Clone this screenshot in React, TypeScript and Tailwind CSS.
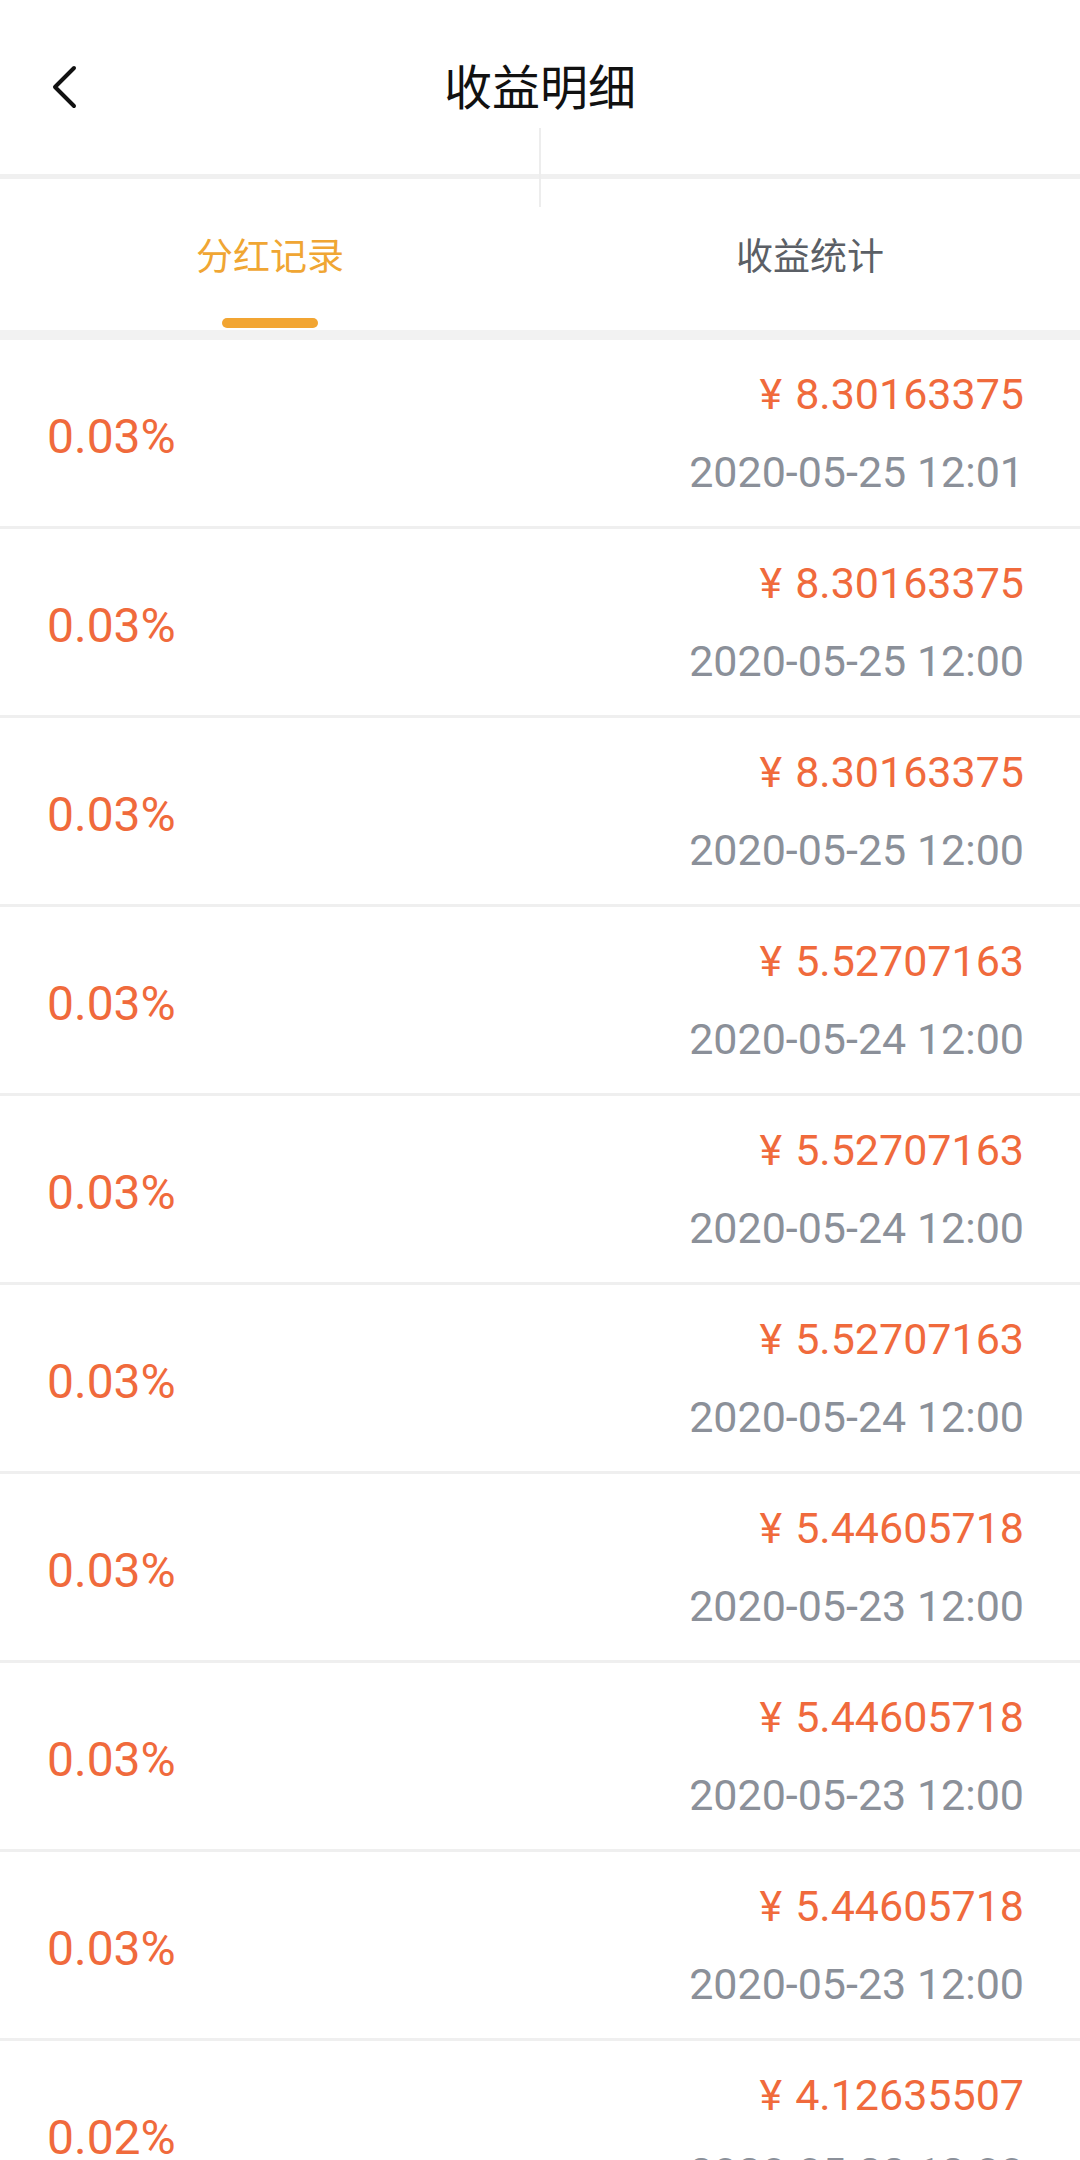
import { Fragment } from "react";

const rows = [
  { rate: "0.03%", amount: "8.30163375", time: "2020-05-25 12:01" },
  { rate: "0.03%", amount: "8.30163375", time: "2020-05-25 12:00" },
  { rate: "0.03%", amount: "8.30163375", time: "2020-05-25 12:00" },
  { rate: "0.03%", amount: "5.52707163", time: "2020-05-24 12:00" },
  { rate: "0.03%", amount: "5.52707163", time: "2020-05-24 12:00" },
  { rate: "0.03%", amount: "5.52707163", time: "2020-05-24 12:00" },
  { rate: "0.03%", amount: "5.44605718", time: "2020-05-23 12:00" },
  { rate: "0.03%", amount: "5.44605718", time: "2020-05-23 12:00" },
  { rate: "0.03%", amount: "5.44605718", time: "2020-05-23 12:00" },
  { rate: "0.02%", amount: "4.12635507", time: "2020-05-22 12:00" },
];

function BackIcon() {
  return (
    <svg width="40" height="56" viewBox="0 0 40 56" fill="none">
      <path
        d="M22 9 L3 28 L22 47"
        stroke="#111"
        strokeWidth="4"
        strokeLinecap="round"
        strokeLinejoin="round"
      />
    </svg>
  );
}

export default function App() {
  return (
    <div className="relative w-[1080px] min-h-screen bg-white font-['Roboto','Noto_Sans_CJK_SC',sans-serif]">
      {/* header */}
      <div className="grid grid-cols-[1fr_auto_1fr] items-center h-[174px]">
        <div className="pl-[52px] flex items-center">
          <BackIcon />
        </div>
        <h1 className="text-[48px] leading-[56px] pb-[6px] text-[#111] font-['Noto_Sans_CJK_SC',sans-serif] font-normal">
          收益明细
        </h1>
        <div />
      </div>
      <div className="h-[5px] bg-[#f0f0f0]" />
      <div className="absolute left-[539px] top-[128px] w-[2px] h-[79px] bg-[#ededed]" />

      {/* tabs */}
      <div className="grid grid-cols-2 h-[151px] font-['Noto_Sans_CJK_SC',sans-serif]">
        <div className="flex flex-col items-center pt-[57px]">
          <span className="text-[37px] leading-[37px] text-[#f0a633]">分红记录</span>
          <span className="mt-[45px] w-[96px] h-[10px] rounded-full bg-[#f2a532]" />
        </div>
        <div className="flex flex-col items-center pt-[57px]">
          <span className="text-[37px] leading-[37px] text-[#5b5f66]">收益统计</span>
        </div>
      </div>
      <div className="h-[10px] bg-[#f2f2f2]" />

      {/* list */}
      <div>
        {rows.map((r, i) => (
          <Fragment key={i}>
            <div className="flex items-center justify-between h-[186px] pl-[47px] pr-[56px]">
              <span className="pt-[8px] text-[48px] leading-[48px] text-[#f06a3c]">{r.rate}</span>
              <div className="flex flex-col items-end gap-[36px]">
                <span className="text-[43px] leading-[42px] text-[#f06a3c]">
                  <span className="mr-[13px]">¥</span>
                  {r.amount}
                </span>
                <span className="text-[43px] leading-[42px] text-[#8b9099]">{r.time}</span>
              </div>
            </div>
            <div className="h-[3px] bg-[#efefef]" />
          </Fragment>
        ))}
      </div>
    </div>
  );
}
